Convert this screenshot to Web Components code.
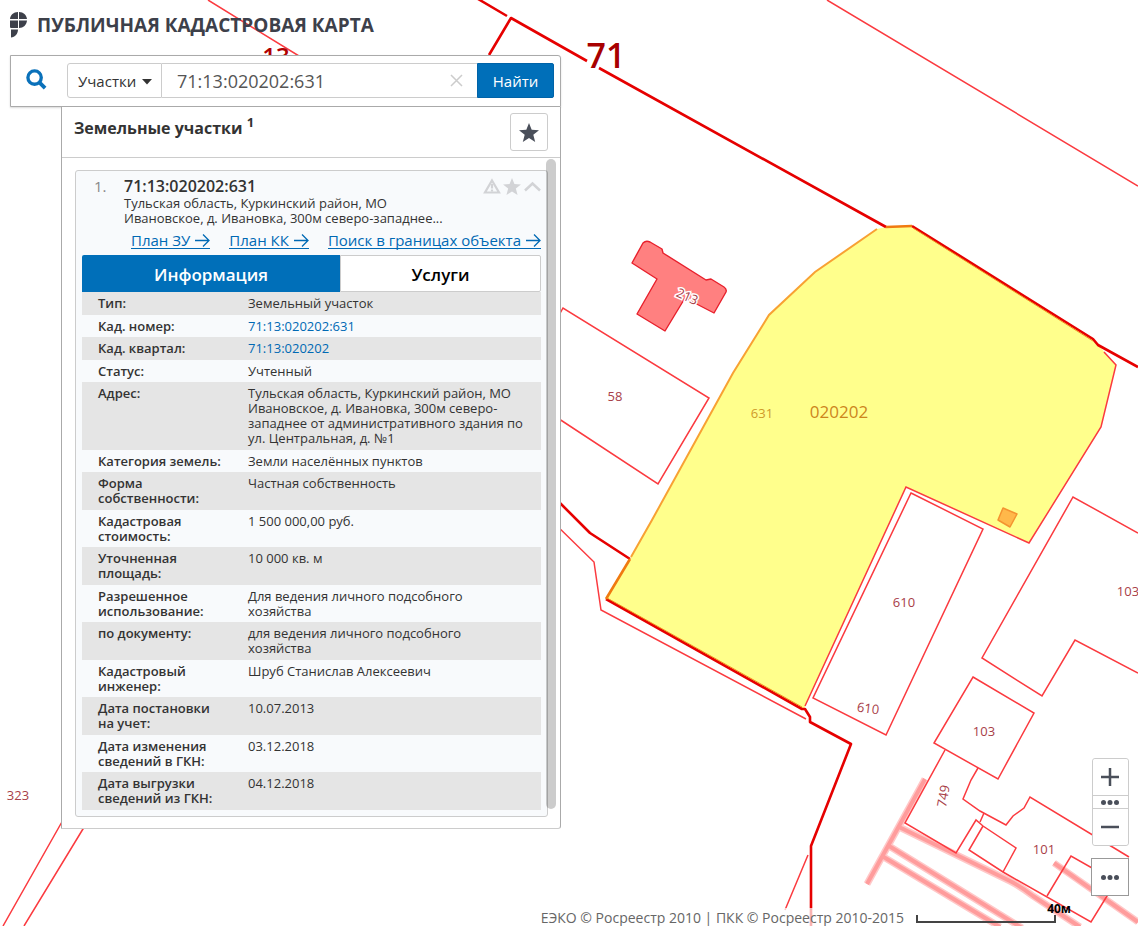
<!DOCTYPE html>
<html lang="ru">
<head>
<meta charset="utf-8">
<title>Публичная кадастровая карта</title>
<style>
  html, body { margin: 0; height: 100%; }
  body { font-family: "Open Sans", "Noto Sans", sans-serif; color: #333; background: #fff; overflow: hidden; }
</style>
</head>
<body>
<cadastral-app></cadastral-app>

<template id="t-app">
  <style>
    :host { display: flex; flex-direction: column; position: relative; min-height: 100vh; overflow: hidden; box-sizing: border-box; }
    parcel-map { position: absolute; inset: 0; }
    .content { position: relative; flex: 1; padding: 0 10px; }
    map-controls { position: absolute; right: 9px; bottom: 30px; }
    map-footer { position: absolute; right: 67px; bottom: 0; }
    .panel { width: 551px; max-width: 100%; }
    result-panel { margin-left: 51px; }
  </style>
  <parcel-map></parcel-map>
  <div class="content">
    <brand-header>ПУБЛИЧНАЯ КАДАСТРОВАЯ КАРТА</brand-header>
    <div class="panel">
      <search-bar></search-bar>
      <result-panel></result-panel>
    </div>
  </div>
  <map-controls></map-controls>
  <map-footer></map-footer>
</template>

<template id="t-brand">
  <style>
    :host { display: block; height: 55px; }
    h1 { margin: 0; display: flex; align-items: center; gap: 10px; height: 50px; font-size: 19px; line-height: 24px; font-weight: 700; color: #3d404a; white-space: nowrap; }
  </style>
  <h1>
    <svg width="17" height="26" viewBox="0 0 17 26" fill="#3d404a" aria-hidden="true">
      <path d="M8 0V7H0C.4 3 3.500 0 8 0zM9 0C13.500 0 16.500 3 17 7H9zM0 8.500H8V16H1.500C.5 16 0 15.500 0 15zM9 8.500H17C16.600 13 13.500 16 9 16zM1 17.500H8C8 22 5 25 1 25.500z"/>
    </svg>
    <slot></slot>
  </h1>
</template>

<template id="t-search">
  <style>
    :host { display: block; }
    form { display: flex; align-items: center; box-sizing: border-box; height: 52px; margin: 0; border: 1px solid #aaa; border-top-right-radius: 3px; background: #fff; padding: 0 6px 2px 0; box-shadow: 0 1px 2px rgba(0,0,0,.15); }
    .icon { flex: 0 0 56px; display: flex; padding: 0 0 2px 15px; box-sizing: border-box; }
    .kind { position: relative; flex: 0 0 95px; height: 35px; }
    .kind svg { position: absolute; right: 10px; top: 16px; pointer-events: none; }
    select { appearance: none; box-sizing: border-box; width: 100%; height: 35px; border: 1px solid #ccc; border-radius: 3px 0 0 3px; background: #fff; font: 15px/20px "Open Sans", sans-serif; color: #333; padding: 2px 0 0 10px; }
    .field { position: relative; flex: 1; min-width: 0; height: 35px; }
    input { box-sizing: border-box; width: 100%; height: 35px; border: solid #ccc; border-width: 1px 0; padding: 2px 36px 0 15px; font: 18px/24px "Open Sans", sans-serif; color: #555; background: #fff; outline: none; }
    .clear { position: absolute; right: 14px; top: 10px; width: 14px; height: 14px; padding: 0; border: 0; background: none; display: flex; }
    .find { flex: 0 0 77px; height: 35px; border: 1px solid #0063a8; border-radius: 0 2px 2px 0; background: #006fb9; color: #fff; font: 15px/20px "Open Sans", sans-serif; padding: 2px 0 0; }
  </style>
  <form onsubmit="return false">
    <span class="icon"><svg width="21" height="21" viewBox="0 0 22 22" fill="none" stroke="#0a71ba" aria-hidden="true"><circle cx="9" cy="9" r="7" stroke-width="3.500"/><path d="M14 14l6 6" stroke-width="4"/></svg></span>
    <div class="kind">
      <select aria-label="Тип объекта"><option>Участки</option><option>ОКС</option></select>
      <svg width="10" height="6" viewBox="0 0 10 6" aria-hidden="true"><path d="M0 0h10L5 5.500z" fill="#333"/></svg>
    </div>
    <div class="field">
      <input type="text" aria-label="Кадастровый номер" value="71:13:020202:631">
      <button class="clear" type="button" aria-label="Очистить"><svg width="14" height="14" viewBox="0 0 14 14" stroke="#ccc" stroke-width="1.500"><path d="M2 2l11 11M13 2L2 13"/></svg></button>
    </div>
    <button class="find" type="submit">Найти</button>
  </form>
</template>

<template id="t-result">
  <style>
    :host { display: block; }
    section { position: relative; background: #fff; border: solid #aaa; border-width: 0 1px 1px; border-bottom-color: #ccc; border-radius: 0 0 3px 0; }
    header { display: flex; justify-content: space-between; align-items: center; height: 50px; padding: 0 12px; border-bottom: 1px solid #ccc; }
    h2 { margin: 0 0 9px; font-size: 16px; line-height: 20px; font-weight: 700; }
    sup { font-size: 13px; line-height: 10px; vertical-align: 7px; }
    .fav { width: 38px; height: 38px; box-sizing: border-box; border: 1px solid #ccc; border-radius: 3px; background: #fff; padding: 0; display: grid; place-items: center; }
    .list { padding: 12px 12px 11px 13px; }
    .bar { position: absolute; right: 4px; top: 52px; bottom: 19px; width: 10px; border-radius: 5px; background: rgba(0,0,0,.2); }
  </style>
  <section>
    <header>
      <h2>Земельные участки <sup>1</sup></h2>
      <button class="fav" type="button" aria-label="Избранное"><svg width="20" height="19" viewBox="0 0 20 19" fill="#4a4f5a"><path d="M10 0l2.700 6.800 7.300.4-5.700 4.600L16.200 19 10 15 3.800 19l1.900-7.200L0 7.200l7.300-.4z"/></svg></button>
    </header>
    <div class="list"><parcel-card></parcel-card></div>
    <div class="bar"></div>
  </section>
</template>

<template id="t-card">
  <style>
    :host { display: block; border: 1px solid #ccc; border-radius: 3px; background: #f8fafc; padding: 6px 6px 6px; }
    .head { display: grid; grid-template-columns: 42px 1fr auto; }
    .num { padding-left: 12px; font-size: 15px; line-height: 18px; color: #888; }
    h3 { margin: 0 0 1px; font-size: 16px; line-height: 18px; font-weight: 600; }
    p { margin: 0; font-size: 13px; line-height: 15px; max-width: 340px; }
    .icons { display: flex; gap: 2px; align-items: flex-start; padding-top: 1px; }
    .icons button { border: 0; background: none; padding: 0; display: flex; width: 18px; height: 17px; }
    nav { display: flex; justify-content: space-between; padding: 6px 0 6px 49px; height: 17px; }
    .tabs { display: grid; grid-template-columns: 258fr 201fr; height: 37px; }
    .tabs button { border: 0; padding: 2px 0 0; font: 600 17px/24px "Open Sans", sans-serif; }
    .tabs .on { background: #006fb9; color: #fff; border-radius: 2px 0 0 0; }
    .tabs .off { background: #fff; color: #000; border: 1px solid #ccc; border-radius: 0 2px 2px 0; }
    table { width: 100%; border-collapse: collapse; font-size: 13px; line-height: 15px; }
    th { width: 126px; text-align: left; vertical-align: top; font-weight: 600; padding: 4px 8px 3px 16px; }
    td { vertical-align: top; padding: 4px 16px 3px; }
    tr:nth-child(odd) { background: #e5e5e5; }
    tr:nth-child(odd) > * { padding-bottom: 4px; }
    td a { color: #0069b4; text-decoration: none; }
  </style>
  <div class="head">
    <span class="num">1.</span>
    <div>
      <h3>71:13:020202:631</h3>
      <p>Тульская область, Куркинский район, МО Ивановское, д. Ивановка, 300м северо-западнее...</p>
    </div>
    <div class="icons">
      <button type="button" aria-label="Сообщить об ошибке"><svg width="18" height="17" viewBox="0 0 18 17" fill="none" stroke="#d2d3d6" stroke-width="2.200"><path d="M9 2.500L16 14.500H2z"/><path d="M9 6v4.500M9 11.500v2"/></svg></button>
      <button type="button" aria-label="В избранное"><svg width="18" height="17" viewBox="0 0 20 19" fill="#d2d3d6"><path d="M10 0l2.700 6.800 7.300.4-5.700 4.600L16.200 19 10 15 3.800 19l1.900-7.200L0 7.200l7.300-.4z"/></svg></button>
      <button type="button" aria-label="Свернуть"><svg width="18" height="17" viewBox="0 0 18 17" fill="none" stroke="#d2d3d6" stroke-width="2.500"><path d="M2 12.500L9.500 5.500L17 12.500"/></svg></button>
    </div>
  </div>
  <nav>
    <arrow-link>План ЗУ</arrow-link><arrow-link>План КК</arrow-link><arrow-link>Поиск в границах объекта</arrow-link>
  </nav>
  <div class="tabs" role="tablist"><button class="on" role="tab" aria-selected="true">Информация</button><button class="off" role="tab">Услуги</button></div>
  <table>
    <tbody>
      <tr><th scope="row">Тип:</th><td>Земельный участок</td></tr>
      <tr><th scope="row">Кад. номер:</th><td><a href="#p">71:13:020202:631</a></td></tr>
      <tr><th scope="row">Кад. квартал:</th><td><a href="#q">71:13:020202</a></td></tr>
      <tr><th scope="row">Статус:</th><td>Учтенный</td></tr>
      <tr><th scope="row">Адрес:</th><td>Тульская область, Куркинский район, МО Ивановское, д. Ивановка, 300м северо-западнее от административного здания по ул. Центральная, д. №1</td></tr>
      <tr><th scope="row">Категория земель:</th><td>Земли населённых пунктов</td></tr>
      <tr><th scope="row">Форма собственности:</th><td>Частная собственность</td></tr>
      <tr><th scope="row">Кадастровая стоимость:</th><td>1 500 000,00 руб.</td></tr>
      <tr><th scope="row">Уточненная площадь:</th><td>10 000 кв. м</td></tr>
      <tr><th scope="row">Разрешенное использование:</th><td>Для ведения личного подсобного хозяйства</td></tr>
      <tr><th scope="row">по документу:</th><td>для ведения личного подсобного хозяйства</td></tr>
      <tr><th scope="row">Кадастровый инженер:</th><td>Шруб Станислав Алексеевич</td></tr>
      <tr><th scope="row">Дата постановки на учет:</th><td>10.07.2013</td></tr>
      <tr><th scope="row">Дата изменения сведений в ГКН:</th><td>03.12.2018</td></tr>
      <tr><th scope="row">Дата выгрузки сведений из ГКН:</th><td>04.12.2018</td></tr>
    </tbody>
  </table>
</template>

<template id="t-arrow">
  <style>
    :host { display: block; }
    a { display: flex; align-items: center; gap: 5px; height: 16px; border-bottom: 1px solid #0069b4; color: #0069b4; text-decoration: none; white-space: nowrap; font-size: 15px; line-height: 16px; }
  </style>
  <a href="#plan"><slot></slot><svg width="15" height="13" viewBox="0 0 15 13" fill="none" stroke="#0069b4" stroke-width="1.300" aria-hidden="true"><path d="M0 6.500H14M8 .5l6 6-6 6"/></svg></a>
</template>

<template id="t-controls">
  <style>
    :host { display: flex; flex-direction: column; align-items: flex-end; gap: 12px; }
    .zoom { display: flex; flex-direction: column; width: 37px; box-sizing: border-box; border: 1px solid #ccc; border-radius: 3px; background: #fff; }
    button { display: grid; place-items: center; border: 0; padding: 0 1px 0 0; background: #fff; height: 36px; border-radius: 3px; }
    .mid { height: 14px; box-sizing: border-box; border: solid #ccc; border-width: 1px 0; border-radius: 0; }
    .more { width: 38px; height: 38px; border: 1px solid #999; border-radius: 0; }
  </style>
  <div class="zoom">
    <button type="button" aria-label="Приблизить"><svg width="18" height="18" stroke="#4a4f5a" stroke-width="2.500"><path d="M0 9h18M9 0v18"/></svg></button>
    <button class="mid" type="button" aria-label="Уровни масштаба"><svg width="18" height="5" fill="#4a4f5a"><circle cx="2.500" cy="2.500" r="2.500"/><circle cx="9" cy="2.500" r="2.500"/><circle cx="15.500" cy="2.500" r="2.500"/></svg></button>
    <button type="button" aria-label="Отдалить"><svg width="18" height="18" stroke="#4a4f5a" stroke-width="2.500"><path d="M0 9h18"/></svg></button>
  </div>
  <button class="more" type="button" aria-label="Ещё"><svg width="18" height="5" fill="#4a4f5a"><circle cx="2.500" cy="2.500" r="2.500"/><circle cx="9" cy="2.500" r="2.500"/><circle cx="15.500" cy="2.500" r="2.500"/></svg></button>
</template>

<template id="t-footer">
  <style>
    :host { display: flex; align-items: flex-end; }
    .copy { padding: 2px 12px 0 4px; background: rgba(255,255,255,.7); color: #666; font-size: 14px; line-height: 16px; white-space: nowrap; }
    .scale { width: 155px; height: 25px; display: flex; flex-direction: column; }
    .scale b { align-self: flex-end; font-size: 12px; line-height: 14px; color: #000; padding-top: 1px; margin-bottom: -1px; }
    .rule { box-sizing: border-box; width: 140px; height: 8px; border: solid #444; border-width: 0 2px 2px; }
  </style>
  <span class="copy">ЕЭКО © Росреестр 2010 | ПКК © Росреестр 2010-2015</span>
  <span class="scale"><b>40м</b><span class="rule"></span></span>
</template>

<template id="t-map">
  <style>
    :host { display: block; }
    svg { display: block; width: 100%; height: 100%; font-family: "Open Sans", sans-serif; }
    .thin { fill: none; stroke: #fb3a3f; stroke-width: 1.500; }
    .thick { fill: none; stroke: #e60000; stroke-width: 2.600; stroke-linejoin: round; }
    .road { fill: none; stroke: #ff9c9c; stroke-width: 4; }
    .halo { fill: none; stroke: #ffc8c8; stroke-width: 7; }
    text { text-anchor: middle; font-size: 13px; fill: #a84048; }
    .big { fill: #a80000; font-size: 34px; font-weight: 600; stroke: #fff; stroke-width: 5px; paint-order: stroke; }
  </style>
  <svg aria-label="Карта участков" role="img">
    <g class="thin">
      <path d="M208 0L330 75M827 0L1138 186"/>
      <path d="M558 317L563 308L709 398L658 484L550 413"/>
      <path d="M911 493L983 529L886 735L813 698Z"/>
      <path d="M550 519L594 562L601 610L806 719"/>
      <path d="M1138 533L1073 497L982 658L1042 696L1075 640L1138 673"/>
      <path d="M973 677L1034 713L998 779L934 743Z"/>
      <path d="M808 855L785 910M63 820L3 926M86 824L24 926" />
    </g>
    <g class="halo"><path d="M925 779L867 884M897 826L1010 881Q1020 886 1033 896L1080 927M889 846L1022 928M882 856L1000 927M1054 863L1138 922"/></g>
    <g class="road"><path d="M925 779L867 884M897 826L1010 881Q1020 886 1033 896L1080 927M889 846L1022 928M882 856L1000 927M1054 863L1138 922"/></g>
    <g class="thin">
      <path d="M945 750L905 823L956 853L976 820L983 826L1016 848L1003 872M983 826L969 850L1003 872L1091 922L1115 883"/>
      <path d="M1047 896L1071 856L1115 881"/>
      <path d="M978 768L971 780L963 799L980 811L1006 825L1013 816L1024 808L1030 797L1129 857M984 813L980 822"/>
    </g>
    <path d="M886 227L912 226L1093 339L1101 348L1116 365L1101 427L1029 543L906 487L804 709L606 599L630 559L652 520L733 373L769 315L815 272L877 229Z" fill="#ffff8c"/>
    <path d="M877 229L815 272L769 315L733 373L652 520L631 557" fill="none" stroke="#f8a133" stroke-width="2"/>
    <path class="thin" d="M1104 352L1116 365L1101 427L1029 543L906 487L805 706"/>
    <path d="M1003 508L1017 514L1010 527L998 520Z" fill="#ffb84a" stroke="#f49330" stroke-width="1.500" stroke-linejoin="round"/>
    <g class="thick">
      <path d="M478 -1L507 16M489 55L511 18L587 61M599 68L886 227"/>
      <path d="M912 226L1093 339L1098 345L1138 367"/>
      <path d="M550 493L590 533L630 559M606 599L802 709L805 709L810 717L810 722L851 744L811 846V926"/>
      <path d="M886 227L912 226M630 559L606 599" stroke="#f07a10"/>
    </g>
    <path d="M913 228L1093 341M607 598L802 707" fill="none" stroke="#f09020" stroke-width="1"/>
    <path d="M632 263L643 243Q646 240 650 242L662 249L663 253L706 280L711 279L724 287Q727 289 726 292L714 313L685 298L665 331L637 314L657 279Z" fill="#ff8080" stroke="#e8202c" stroke-width="1.400" stroke-linejoin="round"/>
    <text x="606" y="68" class="big">71</text>
    <text x="276" y="65" style="font-size:24px;font-weight:600;fill:#b00000">13</text>
    <text transform="rotate(24 687 297)" x="687" y="301" stroke="#fff" stroke-width="3" paint-order="stroke">213</text>
    <text x="615" y="401">58</text>
    <text x="762" y="418" style="fill:#cf9a2a">631</text>
    <text x="839" y="418" style="font-size:17px;fill:#cd851c">020202</text>
    <text x="904" y="607">610</text>
    <text transform="rotate(7 868 709)" x="868" y="713">610</text>
    <text x="1128" y="596">103</text>
    <text x="984" y="736">103</text>
    <text transform="rotate(-80 943 796)" x="943" y="801">749</text>
    <text x="1044" y="854">101</text>
    <text x="18" y="800">323</text>
  </svg>
</template>

<script>
  const define = (name, id) => customElements.define(name, class extends HTMLElement {
    constructor() {
      super();
      this.attachShadow({ mode: "open" }).append(document.getElementById(id).content.cloneNode(true));
    }
  });
  define("parcel-map", "t-map");
  define("brand-header", "t-brand");
  define("search-bar", "t-search");
  define("arrow-link", "t-arrow");
  define("parcel-card", "t-card");
  define("result-panel", "t-result");
  define("map-controls", "t-controls");
  define("map-footer", "t-footer");
  define("cadastral-app", "t-app");
</script>
</body>
</html>
